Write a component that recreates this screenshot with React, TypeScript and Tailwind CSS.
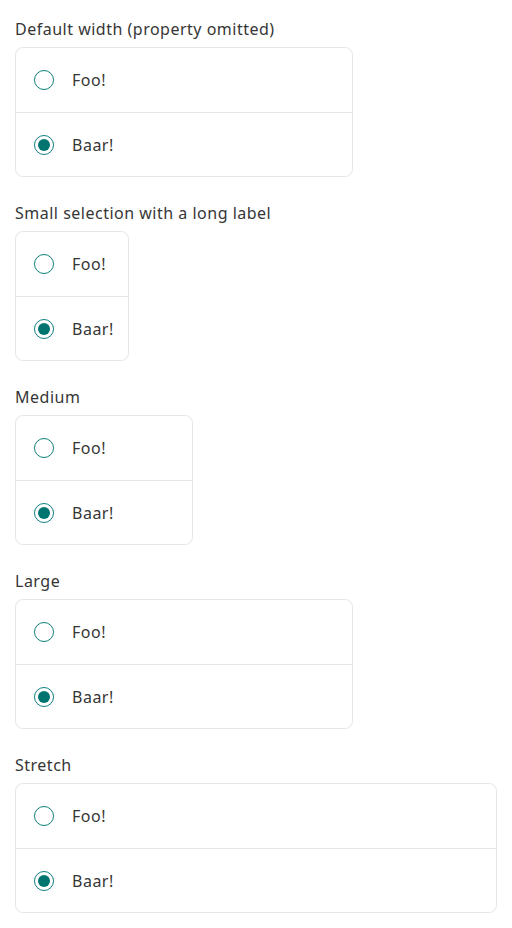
import { useState } from 'react';

type Width = 'default' | 'small' | 'medium' | 'large' | 'stretch';

const widthClass: Record<Width, string> = {
  default: 'w-[338px]',
  small: 'w-[114px]',
  medium: 'w-[178px]',
  large: 'w-[338px]',
  stretch: 'w-full',
};

const options = ['Foo!', 'Baar!'];

function Radio({ checked }: { checked: boolean }) {
  return (
    <span className="flex h-6 w-6 shrink-0 items-center justify-center">
      <span className="flex h-5 w-5 items-center justify-center rounded-full border border-[#0f7f7c] bg-white">
        {checked && <span className="h-3 w-3 rounded-full bg-[#00746f]" />}
      </span>
    </span>
  );
}

function RadioGroup({ label, width }: { label: string; width: Width }) {
  const [value, setValue] = useState('Baar!');

  return (
    <div className="flex flex-col">
      <div className="h-6 text-[16px] leading-6 tracking-[0.5px] text-[#363636]">{label}</div>
      <div className={`mt-[6px] overflow-hidden rounded-lg border border-[#e6e6e6] bg-white ${widthClass[width]}`}>
        {options.map((opt, i) => (
          <label
            key={opt}
            onClick={() => setValue(opt)}
            className={`flex h-16 cursor-pointer items-center gap-4 px-4 ${i > 0 ? 'border-t border-[#e6e6e6]' : ''}`}
          >
            <Radio checked={value === opt} />
            <span className="whitespace-nowrap text-[16px] leading-6 tracking-[0.5px] text-[#363636]">{opt}</span>
          </label>
        ))}
      </div>
    </div>
  );
}

export default function App() {
  return (
    <div
      className="flex min-h-screen flex-col gap-6 bg-white px-[15px] pt-[17px] pb-4"
      style={{ fontFamily: '"Noto Sans", Lato, sans-serif' }}
    >
      <RadioGroup label="Default width (property omitted)" width="default" />
      <RadioGroup label="Small selection with a long label" width="small" />
      <RadioGroup label="Medium" width="medium" />
      <RadioGroup label="Large" width="large" />
      <RadioGroup label="Stretch" width="stretch" />
    </div>
  );
}
